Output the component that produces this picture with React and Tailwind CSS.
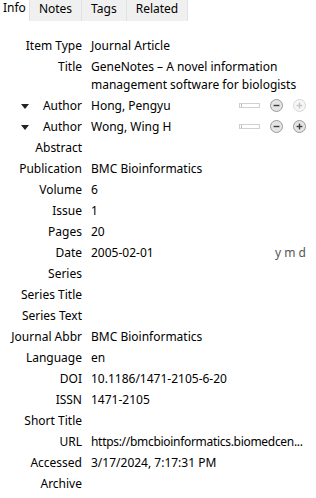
import React from "react";

const rows = [
  { label: "Item Type", value: "Journal Article" },
  { label: "Title", value: "GeneNotes – A novel information management software for biologists" },
  { label: "Author", value: "Hong, Pengyu", author: true, plusOff: true },
  { label: "Author", value: "Wong, Wing H", author: true },
  { label: "Abstract" },
  { label: "Publication", value: "BMC Bioinformatics" },
  { label: "Volume", value: "6" },
  { label: "Issue", value: "1" },
  { label: "Pages", value: "20" },
  { label: "Date", value: "2005-02-01", date: true },
  { label: "Series" },
  { label: "Series Title" },
  { label: "Series Text" },
  { label: "Journal Abbr", value: "BMC Bioinformatics" },
  { label: "Language", value: "en" },
  { label: "DOI", value: "10.1186/1471-2105-6-20" },
  { label: "ISSN", value: "1471-2105" },
  { label: "Short Title" },
  { label: "URL", value: "https://bmcbioinformatics.biomedcen...", url: true },
  { label: "Accessed", value: "3/17/2024, 7:17:31 PM" },
  { label: "Archive" },
];

const tabs = ["Info", "Notes", "Tags", "Related"];

const RoundButton = ({ plus, off }) => (
  <svg width="13" height="13" viewBox="0 0 13 13">
    <circle cx="6.5" cy="6.5" r="6" fill={off ? "#f6f6f6" : "#e4e4e4"} stroke={off ? "#d6d6d6" : "#9a9a9a"} />
    <path d="M3.6 6.5h5.8" stroke={off ? "#c4c4c4" : "#3c3c3c"} strokeWidth="1.4" />
    {plus && <path d="M6.5 3.6v5.8" stroke={off ? "#c4c4c4" : "#3c3c3c"} strokeWidth="1.4" />}
  </svg>
);

export default function App() {
  return (
    <div className="w-[316px] h-[498px] bg-white overflow-hidden text-[12px] text-black" style={{ fontFamily: '"Noto Sans", sans-serif' }}>
      {/* Tabs */}
      <div className="flex h-[21px]">
        {tabs.map((t, i) => (
          <div
            key={t}
            className={
              i === 0
                ? "px-[3px] leading-[15px] bg-white border-r border-[#e2e2e2]"
                : "px-[9px] leading-[17px] bg-[#f0f0f0] border-r border-[#e2e2e2]"
            }
          >
            {t}
          </div>
        ))}
      </div>

      {/* Fields */}
      <div className="pt-[14px] flex flex-col">
        {rows.map((r, i) => (
          <div key={i} className="flex py-[1.5px] leading-[18px]">
            <div className="w-[82px] shrink-0 flex justify-between items-start">
              {r.author ? (
                <svg width="8" height="5" viewBox="0 0 8 5" className="ml-[21px] mt-[7px]">
                  <path d="M0 0h8L4 5z" fill="#222" />
                </svg>
              ) : (
                <span />
              )}
              <span className="text-right">{r.label}</span>
            </div>
            <div className="flex-1 min-w-0 pl-[9px] pr-[10px] flex items-center justify-between">
              <span className={r.url ? "whitespace-nowrap tracking-[-0.3px]" : ""}>{r.value}</span>
              {r.author && (
                <div className="flex items-center shrink-0">
                  <div className="w-[21px] h-[5px] border border-[#d0d0d0] flex items-center">
                    <div className="ml-[1px] w-px h-[3px] bg-[#c0c0c0]" />
                  </div>
                  <div className="ml-[10px]">
                    <RoundButton />
                  </div>
                  <div className="ml-[10px]">
                    <RoundButton plus off={r.plusOff} />
                  </div>
                </div>
              )}
              {r.date && <span className="text-[#555] shrink-0">y m d</span>}
            </div>
          </div>
        ))}
      </div>
    </div>
  );
}
